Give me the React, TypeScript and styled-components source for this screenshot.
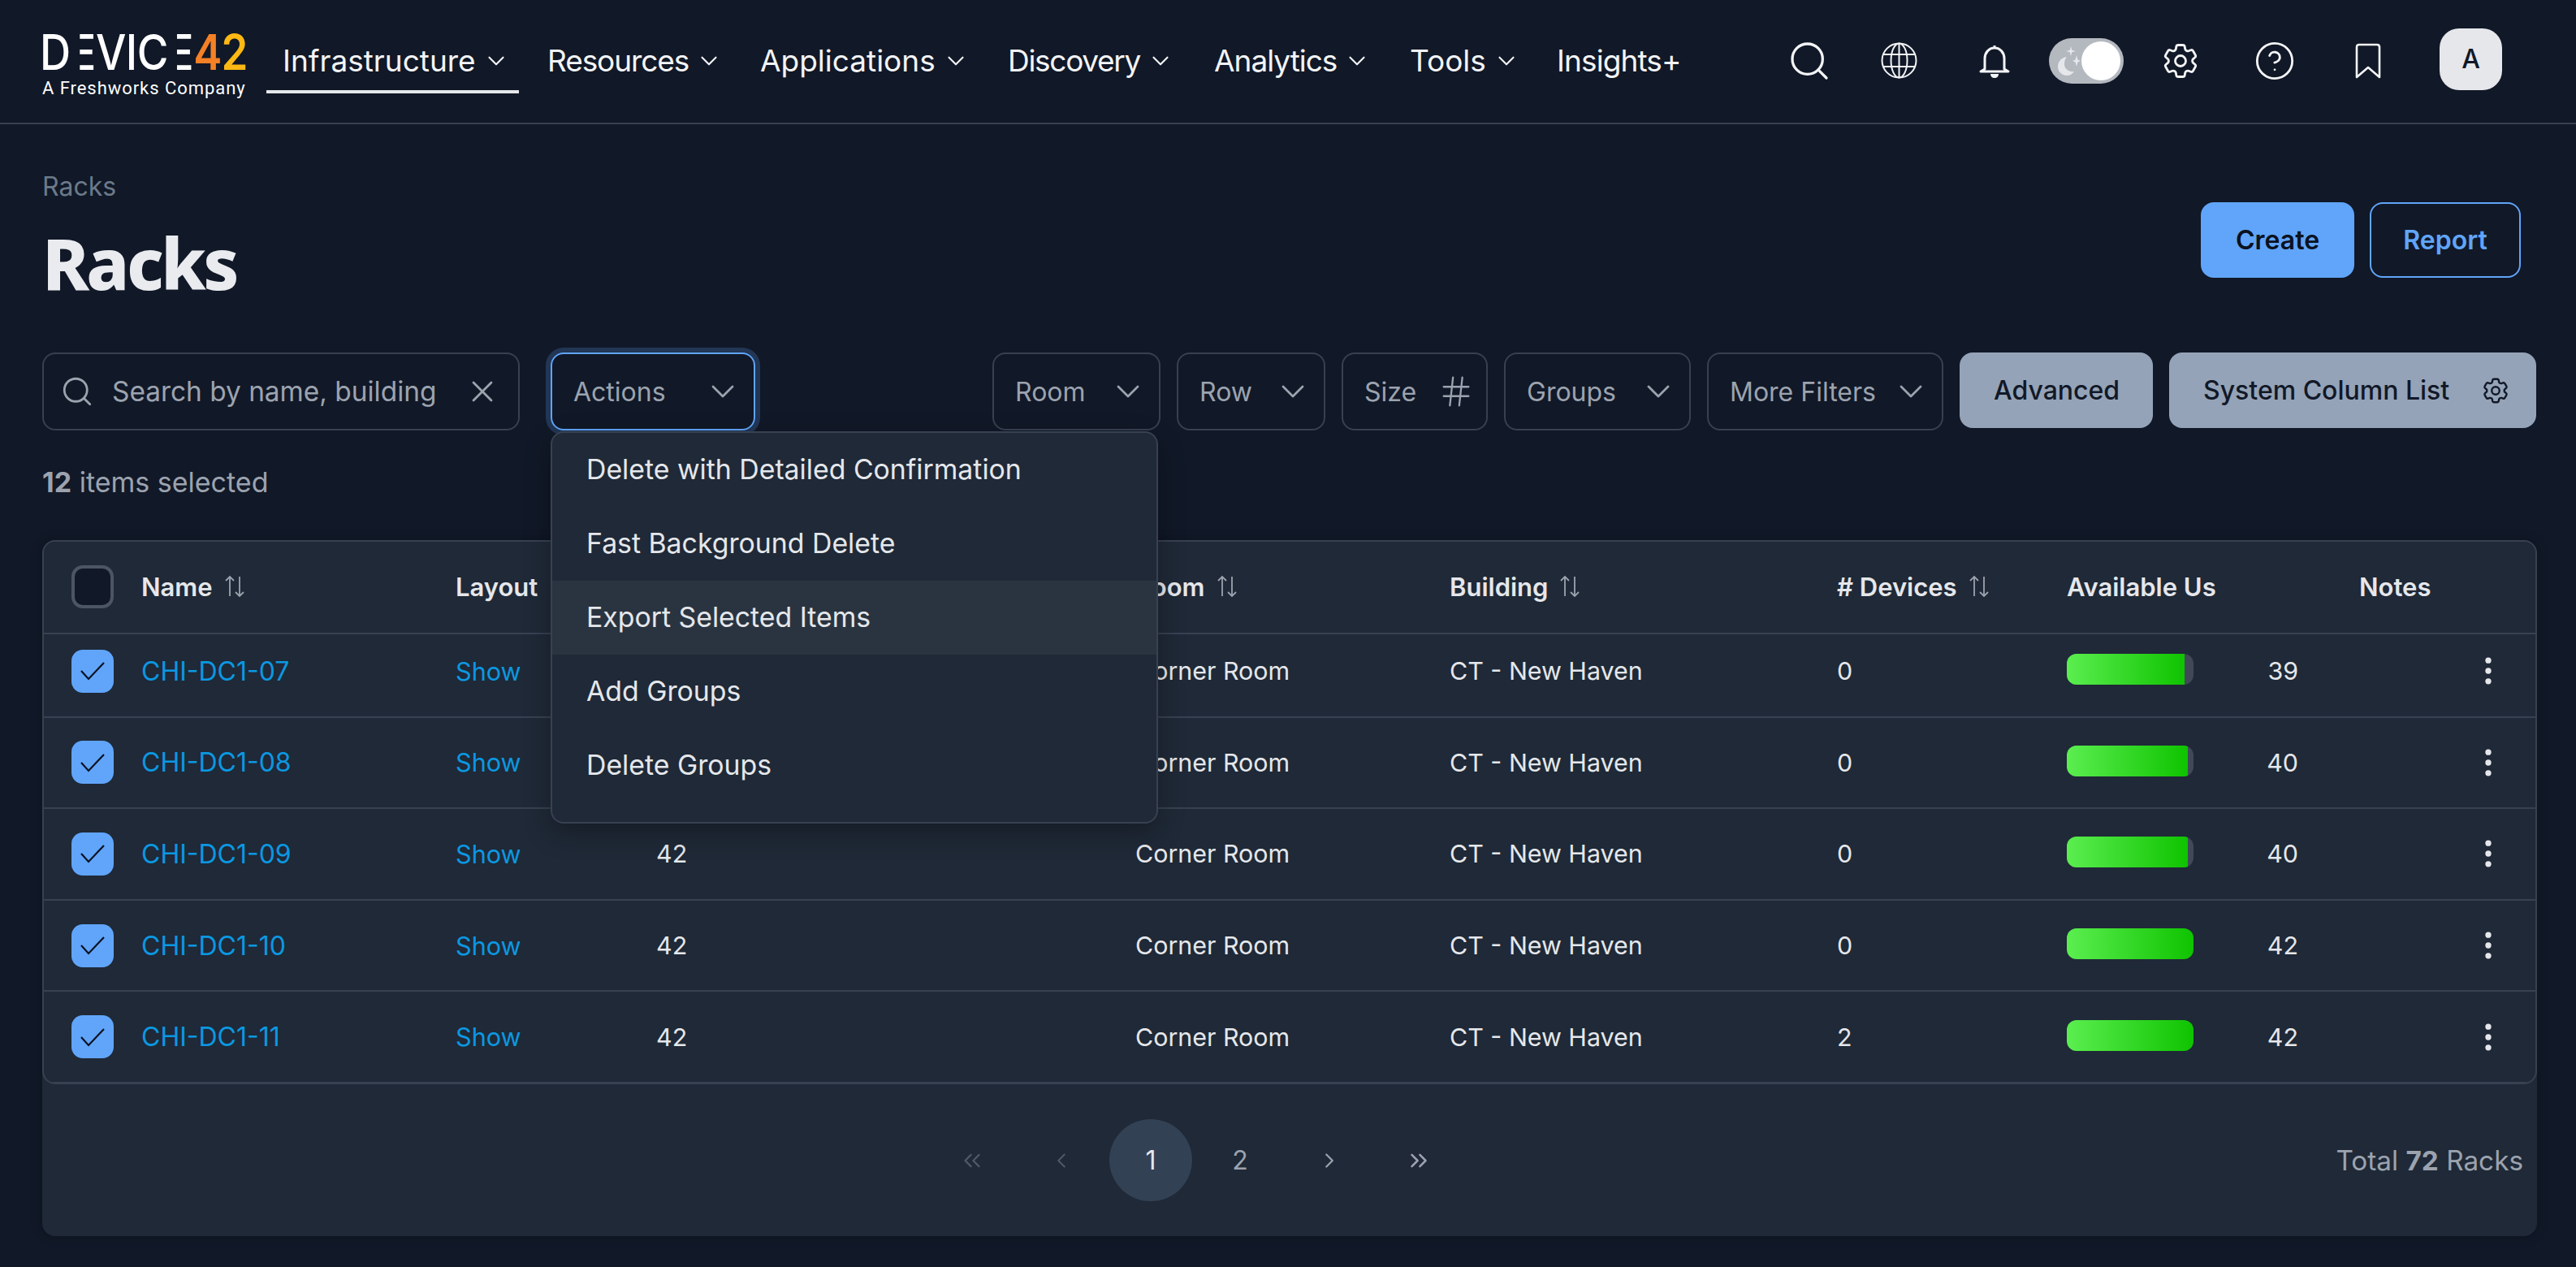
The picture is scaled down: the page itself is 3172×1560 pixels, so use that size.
import React from 'react';
import styled, { createGlobalStyle } from 'styled-components';
import { ChevronDown, ChevronLeft, ChevronRight, ChevronsLeft, ChevronsRight, CircleHelp, EllipsisVertical, Hash, Search, X } from 'lucide-react';
import { HiOutlineCog6Tooth } from 'react-icons/hi2';

const GlobalStyle = createGlobalStyle`
    html, body {
        margin: 0;
        padding: 0;
        background: #111827;
    }

    body {
        font-family: Inter, "Noto Sans", sans-serif;
        color: #e5e7eb;
    }
`;

const Page = styled.div`
    width: 3172px;
    height: 1560px;
    overflow: hidden;
    background: #111827;
`;

const TopBar = styled.header`
    display: flex;
    align-items: center;
    box-sizing: border-box;
    height: 153px;
    padding: 0 0 2px 52px;
    border-bottom: 2px solid #374151;
`;

const Logo = styled.div`
    display: flex;
    flex-direction: column;
    width: 252px;
    margin-top: 14px;
`;

const Wordmark = styled.div`
    display: flex;
    align-items: baseline;
    height: 46px;
    margin-left: -3px;
    font-size: 60px;
    line-height: 46px;
    font-weight: 500;
    color: #ffffff;
    letter-spacing: -0.6px;
    white-space: nowrap;
    transform: scaleX(0.88);
    transform-origin: left center;
`;

// bars only, the stem is covered the way the real mark leaves it out
const BarE = styled.span`
    position: relative;

    &::before {
        content: '';
        position: absolute;
        left: 0;
        top: 0;
        bottom: 0;
        width: 13px;
        background: #111827;
    }
`;

const Digits = styled.span`
    font-weight: 600;
    letter-spacing: -1px;
    background: linear-gradient(90deg, #f58025 0%, #f58025 48%, #fdb813 56%, #fdb813 100%);
    -webkit-background-clip: text;
    background-clip: text;
    color: transparent;
`;

const Tagline = styled.div`
    margin-top: 9px;
    font-family: Roboto, sans-serif;
    font-size: 22px;
    line-height: 26px;
    font-weight: 400;
    letter-spacing: 0.95px;
    color: #ffffff;
    white-space: nowrap;
`;

const Nav = styled.nav`
    display: flex;
    align-items: center;
    gap: 15px;
    margin-left: 24px;
`;

const NavItem = styled.a<{ $active?: boolean; $width?: number; $tracking?: number }>`
    display: flex;
    align-items: center;
    gap: 8px;
    box-sizing: border-box;
    width: ${p => (p.$width ? `${p.$width}px` : 'auto')};
    height: 76px;
    margin-top: 4px;
    padding: 0 0 0 20px;
    font-size: 37px;
    letter-spacing: ${p => p.$tracking || 0}px;
    color: #f3f4f6;
    border-bottom: 4px solid ${p => (p.$active ? '#e5e7eb' : 'transparent')};
    white-space: nowrap;
`;

const NavTools = styled.div`
    display: flex;
    align-items: center;
    margin-left: auto;
    padding-right: 91px;
    color: #f3f4f6;
`;

const NavTool = styled.span<{ $gap: number }>`
    display: flex;
    margin-left: ${p => p.$gap}px;
`;

const ThemeToggle = styled.div`
    display: flex;
    align-items: center;
    justify-content: space-between;
    box-sizing: border-box;
    width: 92px;
    height: 56px;
    margin-left: 47px;
    padding: 0 4px 0 9px;
    border-radius: 28px;
    background: #b4b8bf;
`;

const ToggleKnob = styled.span`
    width: 48px;
    height: 48px;
    border-radius: 50%;
    background: #ffffff;
`;

const Avatar = styled.div`
    display: flex;
    align-items: center;
    justify-content: center;
    width: 77px;
    height: 76px;
    margin-left: 72px;
    margin-top: -4px;
    border-radius: 24px;
    background: #e5e7eb;
    color: #111827;
    font-size: 32px;
    font-weight: 500;
`;

const Main = styled.main`
    padding: 0 48px 0 52px;
`;

const TitleRow = styled.div`
    display: flex;
    justify-content: space-between;
    height: 281px;
`;

const Breadcrumb = styled.div`
    margin-top: 57px;
    font-size: 32px;
    line-height: 40px;
    color: #6b7a8a;
`;

const Title = styled.h1`
    margin: 18px 0 0;
    font-family: "Noto Sans", sans-serif;
    font-size: 87px;
    line-height: 110px;
    font-weight: 800;
    letter-spacing: -3.5px;
    color: #e9ebef;
`;

const TitleActions = styled.div`
    display: flex;
    gap: 19px;
    margin: 96px 20px 0 0;
`;

const PrimaryButton = styled.button<{ $outline?: boolean }>`
    box-sizing: border-box;
    width: ${p => (p.$outline ? 186 : 189)}px;
    height: 93px;
    border: 2px solid #60a5fa;
    border-radius: 16px;
    background: ${p => (p.$outline ? 'transparent' : '#60a5fa')};
    color: ${p => (p.$outline ? '#60a5fa' : '#0b1220')};
    font-family: inherit;
    font-size: 32px;
    font-weight: 600;
`;

const Toolbar = styled.div`
    display: flex;
    align-items: flex-start;
    height: 96px;
`;

const SearchBox = styled.div`
    display: flex;
    align-items: center;
    box-sizing: border-box;
    width: 588px;
    height: 96px;
    padding: 0 22px 0 20px;
    border: 2px solid #374151;
    border-radius: 16px;
    color: #9ca3af;
    font-size: 33.4px;
`;

const SearchLabel = styled.span`
    flex: 1;
    margin-left: 22px;
    white-space: nowrap;
`;

const ActionsWrap = styled.div`
    position: relative;
    margin: 0 292px 0 38px;
`;

const Select = styled.div<{ $width: number; $focused?: boolean }>`
    display: flex;
    align-items: center;
    justify-content: space-between;
    box-sizing: border-box;
    width: ${p => p.$width}px;
    height: 96px;
    padding: 0 14px 0 26px;
    border: 2px solid ${p => (p.$focused ? '#60a5fa' : '#374151')};
    border-radius: 16px;
    box-shadow: ${p => (p.$focused ? '0 0 0 6px rgba(96, 165, 250, 0.22)' : 'none')};
    color: #9ca3af;
    font-size: 32px;
    white-space: nowrap;
`;

const Filters = styled.div`
    display: flex;
    gap: 20px;
`;

const GreyButton = styled.button<{ $width: number }>`
    display: flex;
    align-items: center;
    justify-content: space-between;
    box-sizing: border-box;
    width: ${p => p.$width}px;
    height: 93px;
    padding: 0 31px 0 42px;
    border: 0;
    border-radius: 16px;
    background: #94a3b8;
    color: #111827;
    font-family: inherit;
    font-size: 32px;
    font-weight: 500;
    white-space: nowrap;
`;

const Menu = styled.ul`
    position: absolute;
    z-index: 5;
    top: 97px;
    left: 0;
    box-sizing: border-box;
    width: 748px;
    height: 483px;
    margin: 0;
    padding: 0;
    list-style: none;
    border: 2px solid #374151;
    border-radius: 16px;
    background: #1f2937;
    box-shadow: 0 12px 32px rgba(0, 0, 0, 0.3);
`;

const MenuItem = styled.li<{ $hover?: boolean }>`
    display: flex;
    align-items: center;
    height: 91px;
    padding: 0 0 2px 42px;
    box-sizing: border-box;
    background: ${p => (p.$hover ? '#2a3441' : 'transparent')};
    color: #e5e7eb;
    font-size: 33.8px;
`;

const SelectedCount = styled.div`
    height: 135px;
    padding-top: 44px;
    box-sizing: border-box;
    font-size: 34px;
    line-height: 40px;
    color: #9ca3af;

    b {
        font-weight: 700;
    }
`;

const Card = styled.section`
    box-sizing: border-box;
    height: 857px;
    border-radius: 16px;
    background: #1f2937;
    box-shadow: 0 0 14px rgba(0, 0, 0, 0.25);
`;

const TableFrame = styled.div`
    box-sizing: border-box;
    height: 670px;
    overflow: hidden;
    border: 2px solid #374151;
    border-radius: 16px;
`;

const columns = '120px 387px 247px 590px 387px 477px 283px 360px 137px 80px';

const HeadRow = styled.div`
    position: relative;
    z-index: 1;
    display: grid;
    grid-template-columns: ${columns};
    align-items: center;
    box-sizing: border-box;
    height: 114px;
    padding-bottom: 2px;
    border-bottom: 2px solid #374151;
    background: #1f2937;
    font-size: 31px;
    font-weight: 600;
    color: #e5e7eb;
`;

const HeadCell = styled.div`
    display: flex;
    align-items: center;
    gap: 14px;
    white-space: nowrap;
`;

const RowClip = styled.div`
    margin-top: -10px;
`;

const Row = styled.div`
    display: grid;
    grid-template-columns: ${columns};
    align-items: center;
    box-sizing: border-box;
    height: 112.6px;
    border-bottom: 2px solid #374151;
    font-size: 30.4px;
    color: #e5e7eb;
`;

const CheckCell = styled.div`
    padding-left: 34px;
`;

const CheckBox = styled.span<{ $checked?: boolean }>`
    display: flex;
    align-items: center;
    justify-content: center;
    box-sizing: border-box;
    width: 52px;
    height: 53px;
    border: ${p => (p.$checked ? '0' : '4px solid #4b5563')};
    border-radius: 14px;
    background: ${p => (p.$checked ? '#60a5fa' : '#111827')};
`;

const LinkText = styled.a`
    color: #0b98e2;
    font-size: 30.6px;
`;

const RackLink = styled(LinkText)`
    font-size: 32px;
`;

const UsageCell = styled.div`
    display: flex;
    align-items: center;
`;

const UsageTrack = styled.div`
    width: 156px;
    height: 38px;
    margin-bottom: 4px;
    overflow: hidden;
    border-radius: 12px;
    background: #414959;
`;

const UsageFill = styled.div`
    height: 100%;
    background: linear-gradient(90deg, #5bee50 0%, #0fc300 100%);
`;

const UsageValue = styled.span`
    width: 129px;
    text-align: right;
`;

const KebabCell = styled.div`
    display: flex;
    color: #e5e7eb;
`;

const Footer = styled.div`
    display: flex;
    align-items: center;
    justify-content: space-between;
    height: 187px;
    padding: 0 17px 0 1094px;
`;

const Pager = styled.div`
    display: flex;
    gap: 8px;
`;

const PageButton = styled.span<{ $current?: boolean; $dim?: boolean }>`
    display: flex;
    align-items: center;
    justify-content: center;
    width: 102px;
    height: 101px;
    border-radius: 50%;
    background: ${p => (p.$current ? '#334155' : 'transparent')};
    color: ${p => (p.$current ? '#e5e7eb' : p.$dim ? '#4f5966' : '#9ca3af')};
    font-size: 32px;
`;

const Total = styled.div`
    font-size: 33.3px;
    color: #9ca3af;

    b {
        font-weight: 700;
    }
`;

const chevron = <ChevronDown size={48} strokeWidth={1.4} />;
const navChevron = <ChevronDown size={34} strokeWidth={1.5} />;

const SortIcon = () => (
    <svg width='26' height='28' viewBox='0 0 26 28' fill='none' stroke='#9ca3af' strokeWidth='1.8'>
        <path d='M7 26V2M2 7l5-5 5 5' />
        <path d='M19 2v24M14 21l5 5 5-5' />
    </svg>
);

const CheckIcon = () => (
    <svg width='32' height='24' viewBox='0 0 32 24' fill='none' stroke='#0b1220' strokeWidth='2.2'>
        <path d='M2 12l9 10L30 2' />
    </svg>
);

const GlobeIcon = () => (
    <svg width='45' height='45' viewBox='0 0 45 45' fill='none' stroke='currentColor' strokeWidth='2'>
        <circle cx='22.5' cy='22.5' r='21' />
        <ellipse cx='22.5' cy='22.5' rx='10' ry='21' />
        <path d='M22.5 1.5v42M3 15h39M3 30h39' />
    </svg>
);

const BellIcon = () => (
    <svg width='40' height='44' viewBox='0 0 40 44' fill='none' stroke='currentColor' strokeWidth='3' strokeLinejoin='round'>
        <path d='M20 3v3M8 32V19c0-7 5-13 12-13s12 6 12 13v13l5 3H3z' />
        <path d='M15 38h10c0 3-2 5-5 5s-5-2-5-5z' fill='currentColor' stroke='none' />
    </svg>
);

const BookmarkIcon = () => (
    <svg width='32' height='44' viewBox='0 0 32 44' fill='none' stroke='currentColor' strokeWidth='2.6' strokeLinejoin='round'>
        <path d='M2 42V5c0-2 1-3 3-3h22c2 0 3 1 3 3v37L16 30z' />
    </svg>
);

const MoonStars = () => (
    <svg width='30' height='44' viewBox='0 0 30 44' fill='#e5e7eb'>
        <path d='M13 17c-7 1-11 6-11 12s5 11 11 11c4 0 7-2 9-5-6 1-12-3-12-9 0-4 1-7 3-9z' />
        <path d='M18 4l1.3 4.7L24 10l-4.7 1.3L18 16l-1.3-4.700L12 10l4.700-1.300z' />
        <path d='M25 15l1.500 5.500L30 22l-3.500 1.500L25 29l-1.500-5.500L20 22l3.500-1.500z' />
    </svg>
);

type Rack = { name: string; size?: number; devices: number; free: number };

// the size of 07 and 08 sits behind the open Actions menu
const racks: Rack[] = [
    { name: 'CHI-DC1-07', devices: 0, free: 39 },
    { name: 'CHI-DC1-08', devices: 0, free: 40 },
    { name: 'CHI-DC1-09', size: 42, devices: 0, free: 40 },
    { name: 'CHI-DC1-10', size: 42, devices: 0, free: 42 },
    { name: 'CHI-DC1-11', size: 42, devices: 2, free: 42 },
];

const navItems = [
    { label: 'Resources', width: 247, tracking: -1.1 },
    { label: 'Applications', width: 290, tracking: 0 },
    { label: 'Discovery', width: 239, tracking: -1.3 },
    { label: 'Analytics', width: 226, tracking: -1 },
    { label: 'Tools', width: 166, tracking: 0 },
];

const menuItems = [
    'Delete with Detailed Confirmation',
    'Fast Background Delete',
    'Export Selected Items',
    'Add Groups',
    'Delete Groups',
];

export default function App() {
    return (
        <Page>
            <GlobalStyle />
            <TopBar>
                <Logo>
                    <Wordmark>
                        D<BarE>E</BarE>VIC<BarE>E</BarE>
                        <Digits>42</Digits>
                    </Wordmark>
                    <Tagline>A Freshworks Company</Tagline>
                </Logo>
                <Nav>
                    <NavItem $active $width={311}>
                        Infrastructure
                        { navChevron }
                    </NavItem>
                    { navItems.map(item => (
                        <NavItem key={ item.label } $width={ item.width } $tracking={ item.tracking }>
                            { item.label }
                            { navChevron }
                        </NavItem>
                    )) }
                    <NavItem $tracking={-0.9}>Insights+</NavItem>
                </Nav>
                <NavTools>
                    <NavTool $gap={0}><Search size={56} strokeWidth={1.4} /></NavTool>
                    <NavTool $gap={60}><GlobeIcon /></NavTool>
                    <NavTool $gap={75}><BellIcon /></NavTool>
                    <ThemeToggle>
                        <MoonStars />
                        <ToggleKnob />
                    </ThemeToggle>
                    <NavTool $gap={44}><HiOutlineCog6Tooth size={52} strokeWidth={1.3} /></NavTool>
                    <NavTool $gap={64}><CircleHelp size={52} strokeWidth={1.3} /></NavTool>
                    <NavTool $gap={73}><BookmarkIcon /></NavTool>
                    <Avatar>A</Avatar>
                </NavTools>
            </TopBar>

            <Main>
                <TitleRow>
                    <div>
                        <Breadcrumb>Racks</Breadcrumb>
                        <Title>Racks</Title>
                    </div>
                    <TitleActions>
                        <PrimaryButton>Create</PrimaryButton>
                        <PrimaryButton $outline>Report</PrimaryButton>
                    </TitleActions>
                </TitleRow>

                <Toolbar>
                    <SearchBox>
                        <Search size={42} strokeWidth={1.6} />
                        <SearchLabel>Search by name, building</SearchLabel>
                        <X size={44} strokeWidth={1.5} />
                    </SearchBox>
                    <ActionsWrap>
                        <Select $width={252} $focused>Actions{ chevron }</Select>
                        <Menu>
                            { menuItems.map(item => (
                                <MenuItem key={ item } $hover={ item === 'Export Selected Items' }>{ item }</MenuItem>
                            )) }
                        </Menu>
                    </ActionsWrap>
                    <Filters>
                        <Select $width={207}>Room{ chevron }</Select>
                        <Select $width={183}>Row{ chevron }</Select>
                        <Select $width={180}>Size<Hash size={46} strokeWidth={1.2} /></Select>
                        <Select $width={230}>Groups{ chevron }</Select>
                        <Select $width={291}>More Filters{ chevron }</Select>
                        <GreyButton $width={238}>Advanced</GreyButton>
                        <GreyButton $width={452}>
                            System Column List
                            <HiOutlineCog6Tooth size={38} />
                        </GreyButton>
                    </Filters>
                </Toolbar>

                <SelectedCount><b>12</b> items selected</SelectedCount>

                <Card>
                    <TableFrame>
                        <HeadRow>
                            <CheckCell><CheckBox /></CheckCell>
                            <HeadCell>Name <SortIcon /></HeadCell>
                            <HeadCell>Layout</HeadCell>
                            <HeadCell>Size</HeadCell>
                            <HeadCell>Room <SortIcon /></HeadCell>
                            <HeadCell>Building <SortIcon /></HeadCell>
                            <HeadCell># Devices <SortIcon /></HeadCell>
                            <HeadCell>Available Us</HeadCell>
                            <HeadCell>Notes</HeadCell>
                        </HeadRow>
                        <RowClip>
                            { racks.map(rack => (
                                <Row key={ rack.name }>
                                    <CheckCell><CheckBox $checked><CheckIcon /></CheckBox></CheckCell>
                                    <div><RackLink>{ rack.name }</RackLink></div>
                                    <div><LinkText>Show</LinkText></div>
                                    <div>{ rack.size }</div>
                                    <div>Corner Room</div>
                                    <div>CT - New Haven</div>
                                    <div>{ rack.devices }</div>
                                    <UsageCell>
                                        <UsageTrack>
                                            <UsageFill style={ { width: `${(rack.free / 42) * 100}%` } } />
                                        </UsageTrack>
                                        <UsageValue>{ rack.free }</UsageValue>
                                    </UsageCell>
                                    <div />
                                    <KebabCell><EllipsisVertical size={44} strokeWidth={2} /></KebabCell>
                                </Row>
                            )) }
                        </RowClip>
                    </TableFrame>
                    <Footer>
                        <Pager>
                            <PageButton $dim><ChevronsLeft size={34} strokeWidth={1.6} /></PageButton>
                            <PageButton $dim><ChevronLeft size={30} strokeWidth={1.6} /></PageButton>
                            <PageButton $current>1</PageButton>
                            <PageButton>2</PageButton>
                            <PageButton><ChevronRight size={30} strokeWidth={1.8} /></PageButton>
                            <PageButton><ChevronsRight size={34} strokeWidth={1.8} /></PageButton>
                        </Pager>
                        <Total>Total <b>72</b> Racks</Total>
                    </Footer>
                </Card>
            </Main>
        </Page>
    );
}
